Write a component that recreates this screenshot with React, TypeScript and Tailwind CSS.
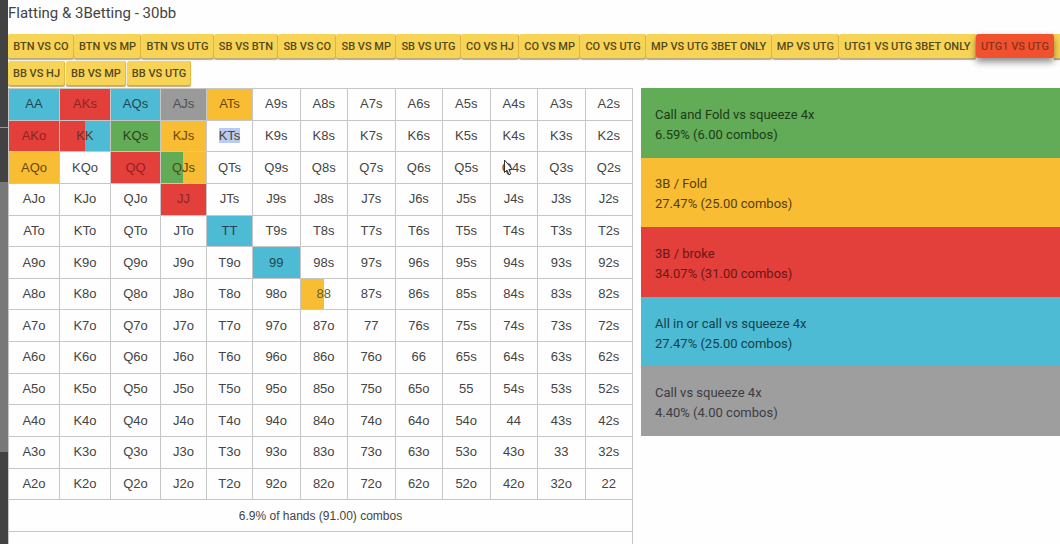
const firstRow = [
  "BTN VS CO", "BTN VS MP", "BTN VS UTG", "SB VS BTN", "SB VS CO", "SB VS MP", "SB VS UTG",
  "CO VS HJ", "CO VS MP", "CO VS UTG", "MP VS UTG 3BET ONLY", "MP VS UTG", "UTG1 VS UTG 3BET ONLY",
  "UTG1 VS UTG",
];
const secondRow = ["BB VS HJ", "BB VS MP", "BB VS UTG"];
const active = "UTG1 VS UTG";

const ranks = "AKQJT98765432".split("");

const cellStyles: Record<string, string> = {
  AA: "bg-[#4dbbd4] text-[#1d4750]",
  AQs: "bg-[#4dbbd4] text-[#1d4750]",
  TT: "bg-[#4dbbd4] text-[#1d4750]",
  "99": "bg-[#4dbbd4] text-[#1d4750]",
  AKs: "bg-[#e33f3b] text-[#8f2422]",
  AKo: "bg-[#e33f3b] text-[#8f2422]",
  QQ: "bg-[#e33f3b] text-[#8f2422]",
  JJ: "bg-[#e33f3b] text-[#8f2422]",
  KQs: "bg-[#63ac57] text-[#24451f]",
  ATs: "bg-[#f8bd33] text-[#654a0c]",
  KJs: "bg-[#f8bd33] text-[#654a0c]",
  AQo: "bg-[#f8bd33] text-[#654a0c]",
  AJs: "bg-[#9a9a9a] text-[#505050]",
  KK: "bg-linear-to-r from-[#e33f3b] from-50% to-[#4dbbd4] to-50% bg-no-repeat text-[#6b3032]",
  QJs: "bg-linear-to-r from-[#63ac57] from-50% to-[#f8bd33] to-50% bg-no-repeat text-[#54480f]",
  "88": "bg-linear-to-r from-[#f8bd33] from-50% to-white to-50% bg-no-repeat text-[#6b5a35]",
};

const legend = [
  { name: "Call and Fold vs squeeze 4x", value: "6.59% (6.00 combos)", style: "bg-[#63ac57] text-[#1d3b19]" },
  { name: "3B / Fold", value: "27.47% (25.00 combos)", style: "bg-[#f8bd33] text-[#55400c]" },
  { name: "3B / broke", value: "34.07% (31.00 combos)", style: "bg-[#e33f3b] text-[#6b1715]" },
  { name: "All in or call vs squeeze 4x", value: "27.47% (25.00 combos)", style: "bg-[#4dbbd4] text-[#153f49]" },
  { name: "Call vs squeeze 4x", value: "4.40% (4.00 combos)", style: "bg-[#9e9e9e] text-[#3c3c42]" },
];

function handName(row: number, col: number) {
  if (row === col) return ranks[row] + ranks[col];
  return row < col ? ranks[row] + ranks[col] + "s" : ranks[col] + ranks[row] + "o";
}

function Pointer() {
  return (
    <svg className="absolute top-[7px] left-3 h-[17px] w-[10px]" viewBox="0 0 10 17" aria-hidden="true">
      <path d="M1.5 1v12.5l2.5-2.4 2 4.6 1.8-.9-1.9-4.4h3.4z" fill="#fff" stroke="#333" strokeWidth="1" />
    </svg>
  );
}

function SpotButton({ label, grow = false }: { label: string; grow?: boolean }) {
  const color =
    label === active
      ? "relative bg-[#f1512d] text-[#8c3320] shadow-[0_4px_7px_rgba(0,0,0,0.45)]"
      : "bg-[#f8d456] text-[#55481b] shadow-[inset_-1px_0_0_rgba(200,160,50,0.45),0_2px_1px_rgba(130,105,30,0.55)]";
  return (
    <button
      type="button"
      className={`h-6 shrink-0 rounded-xs px-[5px] pt-0.5 text-[11px] font-medium whitespace-nowrap ${grow ? "grow" : ""} ${color}`}
    >
      {label}
    </button>
  );
}

export default function App() {
  return (
    <div className="flex h-screen overflow-hidden bg-[#fefefe] font-[Roboto,sans-serif] text-[#444]">
      <aside className="flex w-2 shrink-0 flex-col bg-[#424242]">
        <div className="h-32 border-b border-[#9a9a9a]" />
        <div className="h-[54px]" />
        <div className="h-[270px] bg-[#787878]" />
      </aside>

      <main className="min-w-0 flex-1">
        <h1 className="pt-[3px] text-[15px] leading-5">Flatting &amp; 3Betting - 30bb</h1>

        <nav aria-label="Spots" className="mt-[11px] flex flex-col gap-[3px]">
          <div className="flex">
            {firstRow.map((label) => <SpotButton key={label} label={label} grow />)}
            <button type="button" aria-label="More" className="h-6 w-[6px] shrink-0 bg-[#f8d456] shadow-[0_2px_1px_rgba(130,105,30,0.55)]" />
          </div>
          <div className="flex gap-px">
            {secondRow.map((label) => <SpotButton key={label} label={label} />)}
          </div>
        </nav>

        <div className="mt-[3px] flex items-start gap-2">
          <div className="w-[625px] shrink-0">
            <table className="h-[444px] w-full table-fixed border-collapse text-center font-['Liberation_Sans',sans-serif] text-[13px] leading-4">
              <colgroup>
                <col className="w-[51px]" />
                <col className="w-[51px]" />
                <col className="w-[50px]" />
                <col className="w-[46px]" />
                <col className="w-[46px]" />
                <col span={8} />
              </colgroup>
              <tbody>
                {ranks.map((rank, row) => (
                  <tr key={rank}>
                    {ranks.map((_, col) => {
                      const hand = handName(row, col);
                      return (
                        <td key={hand} className={`border border-[#c6c6c6] p-0 ${cellStyles[hand] ?? ""} ${hand === "Q4s" ? "relative" : ""}`}>
                          {hand === "KTs" ? <span className="bg-[#b9cbf1]">{hand}</span> : hand}
                          {hand === "Q4s" && <Pointer />}
                        </td>
                      );
                    })}
                  </tr>
                ))}
                <tr>
                  <td colSpan={13} className="border border-[#c6c6c6] p-0 text-xs">6.9% of hands (91.00) combos</td>
                </tr>
              </tbody>
            </table>
            <div className="h-4 border-x border-[#c6c6c6]" />
          </div>

          <ul className="flex h-[348px] min-w-0 flex-1 flex-col">
            {legend.map((item) => (
              <li key={item.name} className={`flex flex-1 flex-col justify-center px-[14px] pt-1 text-[13px] leading-5 ${item.style}`}>
                <span>{item.name}</span>
                <span>{item.value}</span>
              </li>
            ))}
          </ul>
        </div>
      </main>
    </div>
  );
}
